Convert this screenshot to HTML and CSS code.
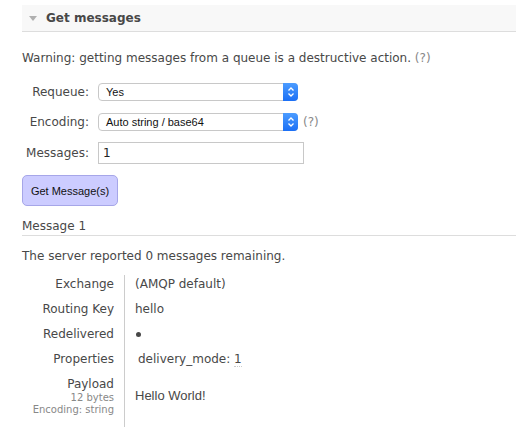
FILE: index.html
```html
<!DOCTYPE html>
<html>
<head>
<meta charset="utf-8">
<link rel="stylesheet" href="styles.css">
</head>
<body>
<div class="section">
  <div class="section-head"><span class="tri"></span><h2>Get messages</h2></div>
  <p class="warn">Warning: getting messages from a queue is a destructive action. <span class="help">(?)</span></p>
  <div class="form">
    <div class="frow">
      <label>Requeue:</label>
      <div class="select"><span class="sel-text">Yes</span><span class="stepper"><svg width="8" height="12" viewBox="0 0 8 12"><path d="M1.5 4.5 L4 2 L6.5 4.5 M1.5 7.5 L4 10 L6.5 7.5" fill="none" stroke="#fff" stroke-width="1.3"/></svg></span></div>
    </div>
    <div class="frow">
      <label>Encoding:</label>
      <div class="select"><span class="sel-text">Auto string / base64</span><span class="stepper"><svg width="8" height="12" viewBox="0 0 8 12"><path d="M1.5 4.5 L4 2 L6.5 4.5 M1.5 7.5 L4 10 L6.5 7.5" fill="none" stroke="#fff" stroke-width="1.3"/></svg></span></div>
      <span class="help">(?)</span>
    </div>
    <div class="frow frow-input">
      <label>Messages:</label>
      <div class="input">1</div>
    </div>
  </div>
  <div class="btn">Get Message(s)</div>
  <h3 class="msg-title">Message 1</h3>
  <p class="remaining">The server reported 0 messages remaining.</p>
  <table class="facts">
    <tr><th>Exchange</th><td>(AMQP default)</td></tr>
    <tr><th>Routing Key</th><td>hello</td></tr>
    <tr><th>Redelivered</th><td><span class="dot"></span></td></tr>
    <tr><th>Properties</th><td class="props">delivery_mode: <abbr>1</abbr></td></tr>
    <tr class="payload"><th>Payload<sub>12 bytes</sub><sub>Encoding: string</sub></th><td><span class="payload-text">Hello World!</span></td></tr>
  </table>
</div>
</body>
</html>
```
FILE: styles.css
```css
html, body { margin: 0; padding: 0; background: #fff; }
body { font-family: "DejaVu Sans", Verdana, sans-serif; font-size: 12px; color: #484848; }
.section { padding: 5px 0 0 22px; }
.section-head {
  display: flex; align-items: center; height: 26px;
  background: #f8f8f8; border-bottom: 1px solid #ddd;
}
.tri {
  width: 0; height: 0; margin: 1px 9px 0 7px;
  border-left: 4.5px solid transparent; border-right: 4.5px solid transparent;
  border-top: 5px solid #b0b0b0;
}
.section-head h2 { margin: 0; font-size: 12px; font-weight: bold; color: #484848; }
.warn { margin: 18px 0 0; line-height: 16px; }
.help { color: #888; }
.form { margin-top: 17px; display: flex; flex-direction: column; }
.frow { display: flex; align-items: center; height: 18px; }
.frow + .frow { margin-top: 12px; }
.frow.frow-input { height: 22px; margin-top: 11px; }
.frow label { width: 67px; text-align: right; margin-right: 9px; line-height: 18px; }
.select {
  width: 200px; height: 18px; box-sizing: border-box; display: flex; align-items: center;
  border: 1px solid #c8c8c8; border-radius: 4px; background: #fff;
  font-family: "Liberation Sans", Arial, sans-serif; font-size: 11px; color: #111;
}
.sel-text { flex: 1; padding-left: 7px; }
.stepper {
  width: 15px; height: 18px; margin-right: -1px; border-radius: 0 4px 4px 0;
  background: linear-gradient(#4c9cff, #1b6ff5); display: flex; align-items: center; justify-content: center;
}
.frow .help { margin-left: 5px; }
.input {
  width: 206px; height: 22px; box-sizing: border-box; border: 1px solid #c8c8c8;
  padding: 2px 4px; line-height: 16px; color: #222;
}
.btn {
  margin-top: 11px; width: 96px; height: 31px; box-sizing: border-box;
  background: #ccccff; border: 1px solid #a6a6e8; border-radius: 5px;
  display: flex; align-items: center; justify-content: center;
  font-family: "Liberation Sans", Arial, sans-serif; font-size: 11px; color: #111;
}
.msg-title {
  margin: 12px 0 0; font-weight: normal; font-size: 12px; padding-bottom: 1px;
  border-bottom: 1px solid #ddd; line-height: 16px;
}
.remaining { margin: 12px 0 0; line-height: 16px; }
.facts { border-collapse: collapse; margin-top: 11px; }
.facts th {
  font-weight: normal; text-align: right; width: 92px; padding: 1px 10px 8px 0;
  border-right: 1px solid #ccc; vertical-align: top; line-height: 16px;
}
.facts td { padding: 1px 0 8px 10px; vertical-align: top; line-height: 16px; }
.facts td.props { padding-left: 13px; }
.dot { display: inline-block; width: 5px; height: 5px; border-radius: 50%; background: #484848; margin-left: 1px; vertical-align: 1px; }
abbr { text-decoration: none; border-bottom: 1px dotted #ccc; }
.facts tr.payload th { padding-bottom: 11px; }
.facts tr.payload td { vertical-align: middle; padding-bottom: 11px; }
.payload-text { font-family: "Liberation Sans", Arial, sans-serif; font-size: 13px; }
.facts sub { display: block; font-size: 10px; color: #888; line-height: 12px; vertical-align: baseline; }
```
